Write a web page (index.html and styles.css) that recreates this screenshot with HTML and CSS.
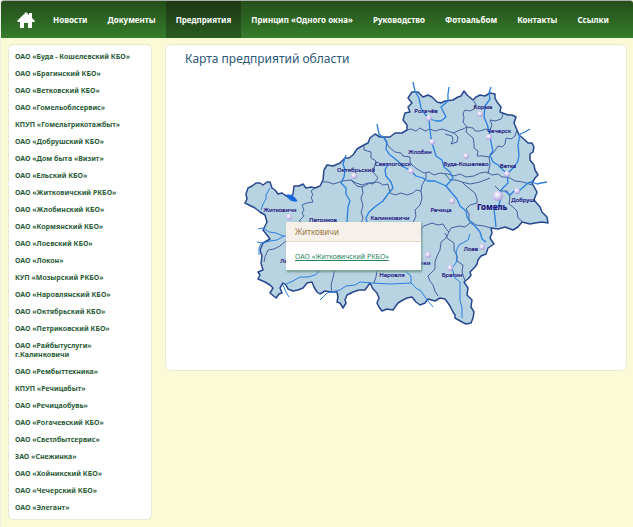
FILE: index.html
```html
<!DOCTYPE html>
<html lang="ru">
<head>
<meta charset="utf-8">
<title>Карта предприятий области</title>
<link rel="stylesheet" href="styles.css">
</head>
<body>
<header class="topbar">
  <nav class="menu">
    <a class="home" href="#" aria-label="Главная"><svg viewBox="0 0 18 16" width="18" height="16"><path d="M9 0 12 3V1h3v5l3 3-1 1h-2v6h-4v-5H7v5H3v-6H1L0 9z"/></svg></a>
    <a href="#">Новости</a>
    <a href="#">Документы</a>
    <a class="active" href="#">Предприятия</a>
    <a href="#">Принцип «Одного окна»</a>
    <a href="#">Руководство</a>
    <a href="#">Фотоальбом</a>
    <a href="#">Контакты</a>
    <a href="#">Ссылки</a>
  </nav>
</header>
<div class="page">
  <aside class="panel side">
    <ul>
      <li><a href="#">ОАО «Буда - Кошелевский КБО»</a></li>
      <li><a href="#">ОАО «Брагинский КБО»</a></li>
      <li><a href="#">ОАО «Ветковский КБО»</a></li>
      <li><a href="#">ОАО «Гомельоблсервис»</a></li>
      <li><a href="#">КПУП «Гомельтрикотажбыт»</a></li>
      <li><a href="#">ОАО «Добрушский КБО»</a></li>
      <li><a href="#">ОАО «Дом быта «Визит»</a></li>
      <li><a href="#">ОАО «Ельский КБО»</a></li>
      <li><a href="#">ОАО «Житковичский РКБО»</a></li>
      <li><a href="#">ОАО «Жлобинский КБО»</a></li>
      <li><a href="#">ОАО «Кормянский КБО»</a></li>
      <li><a href="#">ОАО «Лоевский КБО»</a></li>
      <li><a href="#">ОАО «Локон»</a></li>
      <li><a href="#">КУП «Мозырский РКБО»</a></li>
      <li><a href="#">ОАО «Наровлянский КБО»</a></li>
      <li><a href="#">ОАО «Октябрьский КБО»</a></li>
      <li><a href="#">ОАО «Петриковский КБО»</a></li>
      <li><a href="#">ОАО «Райбытуслуги»<br>г.Калинковичи</a></li>
      <li><a href="#">ОАО «Рембыттехника»</a></li>
      <li><a href="#">КПУП «Речицабыт»</a></li>
      <li><a href="#">ОАО «Речицаобувь»</a></li>
      <li><a href="#">ОАО «Рогачевский КБО»</a></li>
      <li><a href="#">ОАО «Светлбытсервис»</a></li>
      <li><a href="#">ЗАО «Снежинка»</a></li>
      <li><a href="#">ОАО «Хойникский КБО»</a></li>
      <li><a href="#">ОАО «Чечерский КБО»</a></li>
      <li><a href="#">ОАО «Элегант»</a></li>
    </ul>
  </aside>
  <main class="panel content">
    <h1>Карта предприятий области</h1>
    <div class="map">
      <svg viewBox="241 80 310 250" width="310" height="250" role="img" aria-label="Карта области">
        <defs>
          <radialGradient id="dot" cx=".4" cy=".35" r=".65"><stop offset="0" stop-color="#fff"/><stop offset=".5" stop-color="#d9d0f3"/><stop offset="1" stop-color="#a99bd6"/></radialGradient>
        </defs>
        <path class="region" d="M245 203 247 199 246 194 248 188 252 186 256 183 260 183 263 185 267 182 270 182 272 188 275 190 278 194 282 193 285 195 290 198 293 194 294 186 299 186 303 184 306 188 311 187 315 188 320 186 323 180 324 170 327 165 333 166 340 163 345 158 349 158 353 155 357 149 362 146 368 143 370 138 375 134 380 137 385 137 390 137 395 133 402 133 407 130 407 125 403 120 405 113 410 112 408 107 412 103 408 98 412 92 418 92 423 97 428 95 432 97 437 102 441 103 445 101 453 100 458 97 461 96 464 91 467 95 473 100 476 97 480 95 485 96 490 93 495 94 495 98 497 102 501 107 500 112 508 115 512 115 516 117 514 123 517 130 519 135 525 140 528 143 532 143 534 147 533 152 530 154 530 160 534 165 535 170 538 175 535 178 532 183 537 192 534 200 540 207 542 212 547 217 548 223 542 222 535 223 530 224 522 222 518 227 513 230 505 227 498 229 491 228 492 233 490 238 494 244 488 248 486 254 481 256 478 260 477 264 475 267 470 272 471 275 469 278 464 282 468 288 467 295 472 300 471 307 474 312 473 318 471 323 466 324 462 322 455 318 455 315 453 312 450 306 448 303 445 299 440 298 435 301 428 299 425 303 420 305 416 302 412 297 407 298 403 300 398 303 395 307 393 310 387 309 382 311 379 307 377 303 379 298 377 293 373 289 370 283 365 290 359 290 353 292 347 295 345 300 346 303 343 308 340 303 337 302 338 297 337 292 331 292 325 291 320 294 317 292 314 287 312 282 307 283 303 288 298 290 293 291 288 289 286 285 283 283 280 288 282 293 279 294 276 298 270 293 273 288 270 285 265 282 258 279 260 275 258 272 263 270 261 263 262 256 260 250 263 243 270 239 267 235 263 230 267 222 265 215 260 212 255 208Z"/>
        <g class="border">
          <path d="M315 188 311 191 313 195 311 197 313 202 307 203 302 205 304 210 302 213 304 216 300 220 300 224M264 262 265 257 268 250 274 249 280 246 286 241 292 240M332 292 331 285 333 278 335 268"/>
          <path d="M323 182 328 182 333 184 337 183 342 181 351 180 356 183 362 185 368 183 373 184 378 178 373 172 376 161 371 158 371 152 364 150 364 145"/>
          <path d="M384 137 386 142 389 147 395 152 401 153 403 156 410 157 410 162 412 165 417 169 424 173 429 172 434 175 440 173 448 174 454 176 460 174 466 177 474 176 480 173 487 172 492 175 498 174 502 177 508 177 515 181 523 182 532 185"/>
          <path d="M351 180 357 186 362 187 370 183 378 182 383 185 388 184 390 193 395 195 401 193 407 195 413 193 416 190 421 191 422 185 426 178 426 173M362 187 363 193 361 198 363 206 361 212 363 218 361 224M421 191 422 198 420 205 415 210 416 216 412 225"/>
          <path d="M407 130 411 129 416 131 420 128 425 131 430 129 435 131 442 129 448 131 453 133 460 130 463 129 467 127 463 122 464 118 463 113 465 110 470 111 474 109 476 105 474 101M467 127 473 128 475 131 480 131 486 129 490 130 492 125 490 120 495 121 501 119 503 115 501 112"/>
          <path d="M445 134 452 136 453 140 451 144 457 142 458 137 453 132M467 127 466 132 473 138 474 143 474 148 478 151 477 156 483 156 489 157 490 164 488 174M489 157 494 152 498 146 502 147 505 144 506 138 511 139 515 136 517 130"/>
          <path d="M445 174 450 180 456 180 462 182 466 186 470 189 475 193 477 199 477 203 470 205 466 209 469 214 469 220 476 225 484 226 491 228M462 182 470 184 480 182 490 178M495 186 500 191 507 191 510 197 509 204 513 207 517 211 518 218 523 222"/>
          <path d="M421 234 421 229 424 226 432 223 438 225 443 224 446 229 449 232 446 238 441 242 440 250 437 256 435 262 435 269 428 276 430 281 433 285 435 291 438 296M449 232 451 228 459 226 465 227 470 223M445 233 448 239 454 243 454 250 457 256 457 261 463 265 462 272 465 281M377 270 376 277 374 283"/>
        </g>
        <path class="lake" d="M287 195q6-1 10 6-8 1-10-6z"/>
        <g class="river">
          <path d="M413 82 415 91 419 98 421 108 425 114 429 119 430 130 431 138 433 146 436 156 442 160 444 167 450 172 453 178 446 186 451 192 457 199 460 206 466 211 467 217 470 222 475 226 480 232 482 239 486 242"/>
          <path d="M449 87 448 94 448 101 441 107 446 117 441 121 436 121 430 119M491 87 489 93 490 99 485 106 484 117 487 124 489 131 492 147 493 151 490 155 493 162 498 165 507 174 508 183 501 190 501 197 499 205 494 210 495 217 496 227"/>
          <path d="M530 129 525 132 520 134 518 145 519 155 518 161 514 167 507 174M547 182 541 183 537 184 532 182 528 183 520 190 514 191 510 195 505 191"/>
          <path d="M377 124 379 134 384 138 387 142 386 149 389 154 394 158 400 163 404 167 411 171 416 176 423 178 428 181 435 181 446 186"/>
          <path d="M346 155 343 164 345 170 344 177 341 183 346 188 346 194 350 201 348 207 347 222M388 164 385 170 386 176 391 182 393 188 388 194 383 201 376 206 369 212 366 218 367 222"/>
          <path class="thin" d="M270 188 266 195 266 199 263 204 261 210M258 229 263 228 269 232 276 233 283 236 287 236M257 242 263 243 270 241 277 240 284 236M259 255 259 248 262 242M283 285 286 292 289 297M320 300 327 293 340 290 346 286 355 285 360 282 371 283 390 284 411 283 416 288 421 291 425 297 428 301 433 307M286 284 293 281 300 277 308 277 315 275 319 272 319 266M470 234 468 240 459 245 456 251 457 257 456 263 452 268 455 278 460 282 460 288 460 300 462 308 462 318M404 270 411 276 411 283"/>
        </g>
        <g fill="url(#dot)">
          <circle cx="429" cy="118" r="3"/><circle cx="432" cy="142" r="3"/><circle cx="411" cy="171" r="3"/><circle cx="354" cy="176" r="3"/><circle cx="480" cy="114" r="3"/><circle cx="489" cy="137" r="3"/><circle cx="466" cy="156" r="3"/><circle cx="507" cy="174" r="3"/><circle cx="517" cy="191" r="3"/><circle cx="498" cy="196" r="5"/><circle cx="452" cy="201" r="3"/><circle cx="482" cy="247" r="3"/><circle cx="450" cy="268" r="3"/><circle cx="428" cy="255" r="3"/><circle cx="289" cy="217" r="3"/><circle cx="393" cy="268" r="3"/>
        </g>
        <g class="town">
          <text x="426" y="113">Рогачёв</text><text x="483" y="109">Корма</text><text x="499" y="133">Чечерск</text><text x="420" y="154">Жлобин</text><text x="393" y="166">Светлогорск</text><text x="356" y="172">Октябрьский</text><text x="466" y="166">Буда-Кошелево</text><text x="508" y="168">Ветка</text><text x="523" y="202">Добруш</text><text class="city" x="492" y="210">Гомель</text><text x="441" y="212">Речица</text><text x="390" y="220">Калинковичи</text><text x="280" y="212">Житковичи</text><text x="323" y="222">Петриков</text><text x="471" y="251">Лоев</text><text x="452" y="277">Брагин</text><text x="418" y="265">Хойники</text><text x="392" y="277">Наровля</text><text x="361" y="271">Ельск</text><text x="295" y="263">Лельчицы</text>
        </g>
      </svg>
      <div class="popup">
        <h2>Житковичи</h2>
        <p><a href="#">ОАО «Житковичский РКБО»</a></p>
      </div>
    </div>
  </main>
</div>
</body>
</html>
```
FILE: styles.css
```css
* { box-sizing: border-box; }
body {
  margin: 0;
  min-height: 100vh;
  background: #fbfad7;
  border-left: 1px solid #eef0ea;
  font-family: "Noto Sans", "Open Sans", sans-serif;
}
.topbar {
  border-top: 1px solid #a9afaa;
  background: linear-gradient(#254e1a, #357c2b);
  border-radius: 3px 3px 0 0;
}
.menu {
  display: flex;
  height: 37px;
  padding-left: 6px;
}
.menu a {
  display: flex;
  align-items: center;
  padding: 0 10px;
  color: #fff;
  font-size: 8px;
  font-weight: bold;
  text-decoration: none;
  white-space: nowrap;
}
.menu .active { background: linear-gradient(#1d3613, #295c20); }
.menu .home { padding-right: 8px; }
.home svg { fill: #fff; }
.page {
  display: flex;
  align-items: flex-start;
  gap: 13px;
  padding: 6px 6px 8px 7px;
}
.panel {
  background: #fff;
  border: 1px solid #e9e8d3;
  border-radius: 6px;
}
.side {
  flex: 0 0 144px;
  padding: 7px 6px;
}
.side ul {
  display: grid;
  gap: 8px;
  margin: 0;
  padding: 0;
  list-style: none;
}
.side li { line-height: 9px; font-size: 7px; font-weight: bold; }
.side a {
  display: block;
  color: #2a5c38;
  text-decoration: none;
}
.content {
  flex: 1;
  padding: 5px 19px 40px;
}
h1 {
  margin: 0 0 12px;
  color: #2c5777;
  font-size: 12px;
  font-weight: normal;
  line-height: 18px;
}
.map {
  position: relative;
  width: 310px;
  margin: 0 auto;
}
.map svg { display: block; }
.region {
  fill: #b8d3e1;
  stroke: #27488f;
  stroke-width: 1.5;
  stroke-linejoin: round;
}
.border { fill: none; stroke: #4463a0; stroke-width: 1; }
.river {
  fill: none;
  stroke: #2b7fe0;
  stroke-width: 1.3;
  stroke-linejoin: round;
}
.river .thin { stroke-width: 1; }
.lake { fill: #1766dd; stroke: #1766dd; }
.town {
  fill: #1c1580;
  font-size: 6px;
  text-anchor: middle;
  stroke: #1c1580;
  stroke-width: .2;
}
.town .city { font-size: 8px; font-weight: bold; }
.popup {
  position: absolute;
  left: 45px;
  top: 142px;
  width: 135px;
  background: #fff;
  border-bottom: 1px solid #86a69a;
  box-shadow: 1px 1px 2px #6f9590;
}
.popup h2 {
  margin: 0;
  padding: 0 9px;
  background: #f5f0e9;
  border-bottom: 1px solid #e3d8c8;
  color: #98763f;
  font-size: 8px;
  font-weight: normal;
  line-height: 19px;
}
.popup p {
  margin: 0;
  padding: 8px 9px 7px;
  font-size: 7px;
  line-height: 13px;
}
.popup a { color: #2b835a; white-space: nowrap; }
```
